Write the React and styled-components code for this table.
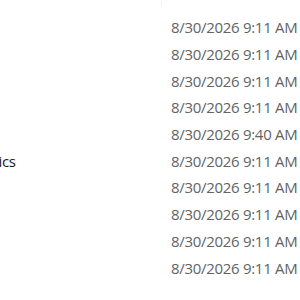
import React from 'react'
import styled, { createGlobalStyle } from 'styled-components'

const Global = createGlobalStyle`
  html, body {
    margin: 0;
    padding: 0;
    background: #ffffff;
    overflow: hidden;
  }
  body {
    font-family: 'Open Sans', 'Noto Sans', sans-serif;
  }
`

const Viewport = styled.div`
  width: 300px;
  height: 300px;
  overflow: hidden;
  background: #ffffff;
`

// list scrolled horizontally, name column partly out of view
const Table = styled.div`
  margin-left: -84px;
  width: 420px;
`

const HeaderRow = styled.div`
  display: grid;
  grid-template-columns: 246px 1fr;
  height: 6px;
`

const HeaderCell = styled.div`
  border-right: ${p => (p.$divider ? '1px solid #f1f1f1' : 'none')};
`

const Rows = styled.div`
  padding-top: 8px;
`

const Row = styled.div`
  display: grid;
  grid-template-columns: 255px 1fr;
  height: 26.7px;
  align-items: center;
  font-size: 15px;
  letter-spacing: -0.3px;
  white-space: nowrap;
`

const Name = styled.div`
  color: #1a1a1a;
  padding-left: 23px;
`

const Modified = styled.div`
  color: #636363;
`

const items = [
  { name: 'Fonts', date: '8/30/2026 9:11 AM' },
  { name: 'Help', date: '8/30/2026 9:11 AM' },
  { name: 'Media', date: '8/30/2026 9:11 AM' },
  { name: 'Logs', date: '8/30/2026 9:11 AM' },
  { name: 'Temp', date: '8/30/2026 9:40 AM' },
  { name: 'Diagnostics', date: '8/30/2026 9:11 AM' },
  { name: 'Setup', date: '8/30/2026 9:11 AM' },
  { name: 'Tasks', date: '8/30/2026 9:11 AM' },
  { name: 'Web', date: '8/30/2026 9:11 AM' },
  { name: 'Cursors', date: '8/30/2026 9:11 AM' },
]

export default function App() {
  return (
    <Viewport>
      <Global />
      <Table>
        <HeaderRow>
          <HeaderCell $divider />
          <HeaderCell />
        </HeaderRow>
        <Rows>
          {items.map((it, i) => (
            <Row key={i}>
              <Name>{it.name}</Name>
              <Modified>{it.date}</Modified>
            </Row>
          ))}
        </Rows>
      </Table>
    </Viewport>
  )
}
